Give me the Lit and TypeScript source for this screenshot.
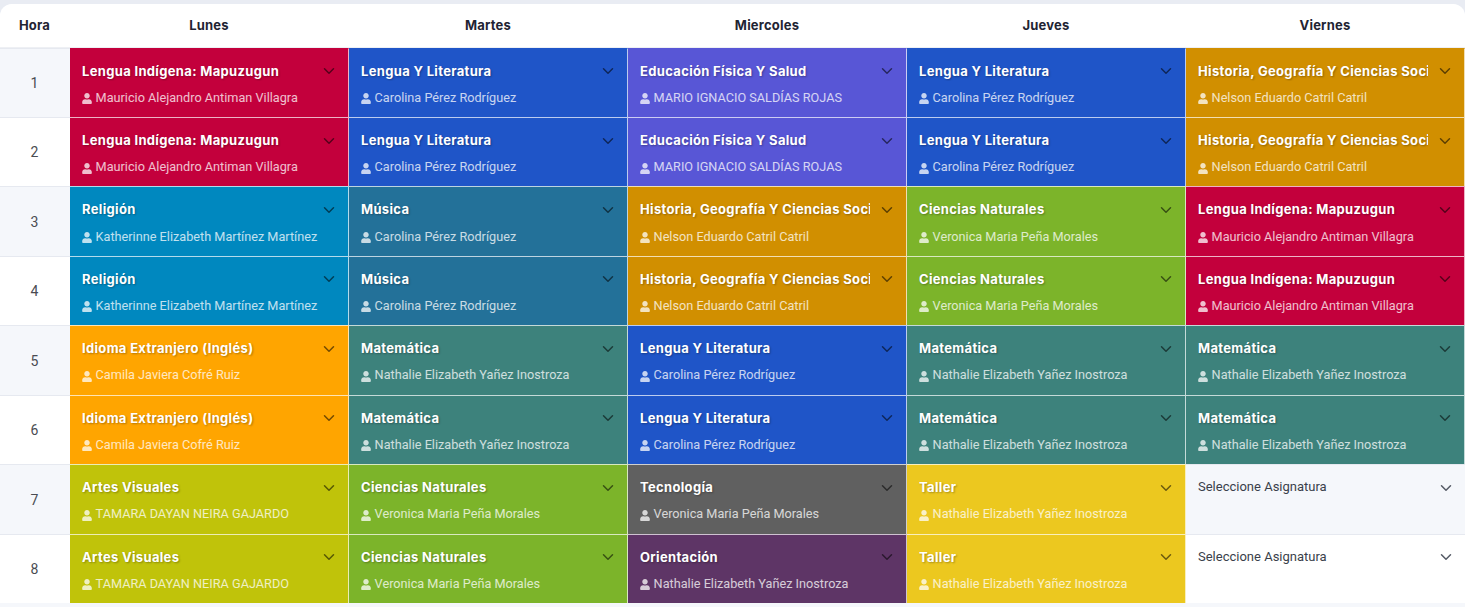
import { LitElement, html, css, svg } from "lit";
import { customElement } from "lit/decorators.js";

type Subject = { name: string; teacher: string; tone: string };

const S: Record<string, Subject> = {
  map: { name: "Lengua Indígena: Mapuzugun", teacher: "Mauricio Alejandro Antiman Villagra", tone: "crimson" },
  len: { name: "Lengua Y Literatura", teacher: "Carolina Pérez Rodríguez", tone: "blue" },
  efi: { name: "Educación Física Y Salud", teacher: "MARIO IGNACIO SALDÍAS ROJAS", tone: "indigo" },
  his: { name: "Historia, Geografía Y Ciencias Sociales", teacher: "Nelson Eduardo Catril Catril", tone: "ochre" },
  rel: { name: "Religión", teacher: "Katherinne Elizabeth Martínez Martínez", tone: "cyan" },
  mus: { name: "Música", teacher: "Carolina Pérez Rodríguez", tone: "steel" },
  cie: { name: "Ciencias Naturales", teacher: "Veronica Maria Peña Morales", tone: "green" },
  ing: { name: "Idioma Extranjero (Inglés)", teacher: "Camila Javiera Cofré Ruiz", tone: "orange" },
  mat: { name: "Matemática", teacher: "Nathalie Elizabeth Yañez Inostroza", tone: "teal" },
  art: { name: "Artes Visuales", teacher: "TAMARA DAYAN NEIRA GAJARDO", tone: "olive" },
  tec: { name: "Tecnología", teacher: "Veronica Maria Peña Morales", tone: "gray" },
  tal: { name: "Taller", teacher: "Nathalie Elizabeth Yañez Inostroza", tone: "yellow" },
  ori: { name: "Orientación", teacher: "Nathalie Elizabeth Yañez Inostroza", tone: "purple" },
};

const DAYS = ["Lunes", "Martes", "Miercoles", "Jueves", "Viernes"];
const ROWS: (string | null)[][] = [
  ["map", "len", "efi", "len", "his"],
  ["map", "len", "efi", "len", "his"],
  ["rel", "mus", "his", "cie", "map"],
  ["rel", "mus", "his", "cie", "map"],
  ["ing", "mat", "len", "mat", "mat"],
  ["ing", "mat", "len", "mat", "mat"],
  ["art", "cie", "tec", "tal", null],
  ["art", "cie", "ori", "tal", null],
];

const chevron = svg`<svg class="chev" viewBox="0 0 16 16" aria-hidden="true"><path d="m2 5 6 6 6-6" fill="none" stroke="currentColor" stroke-width="2" stroke-linecap="round" stroke-linejoin="round"/></svg>`;
const user = svg`<svg class="user" viewBox="0 0 448 512" aria-hidden="true"><path fill="currentColor" d="M224 256c70.7 0 128-57.3 128-128S294.7 0 224 0 96 57.3 96 128s57.3 128 128 128zm89.6 32h-16.7c-22.2 10.2-46.9 16-72.9 16s-50.6-5.8-72.9-16h-16.7C60.2 288 0 348.2 0 422.4V464c0 26.5 21.5 48 48 48h352c26.5 0 48-21.5 48-48v-41.6c0-74.2-60.2-134.4-134.4-134.4z"/></svg>`;

@customElement("app-root")
export class AppRoot extends LitElement {
  static styles = css`
    :host {
      display: block;
      height: 607px;
      overflow: hidden;
      background: #e9ecf3;
      padding-top: 4px;
      box-sizing: border-box;
      font-family: Roboto, "Liberation Sans", sans-serif;
    }
    .grid {
      display: grid;
      grid-template-columns: 70px repeat(5, 1fr);
      grid-template-rows: 43.62px repeat(8, 69.45px);
      height: 603px;
      align-content: start;
      background: #f5f7fb;
      border-radius: 12px 12px 0 0;
      overflow: hidden;
    }
    .head {
      display: flex;
      align-items: center;
      justify-content: center;
      padding-right: 1px;
      font-family: Inter, "Liberation Sans", sans-serif;
      font-size: 13px;
      font-weight: 700;
      letter-spacing: 0.2px;
      color: #1f2433;
      background: #fff;
      border-bottom: 1px solid #eef0f4;
      box-sizing: border-box;
    }
    .hour {
      display: flex;
      align-items: center;
      justify-content: center;
      padding: 0.2px 1px 0 0;
      font-size: 14px;
      color: #4a4c52;
      border-top: 1px solid #e6e9f0;
      box-sizing: border-box;
    }
    .odd { background: #f5f7fb; }
    .even { background: #fff; }
    .cell {
      position: relative;
      min-width: 0;
      box-sizing: border-box;
      border-right: 1px solid rgba(255, 255, 255, 0.7);
      border-top: 1px solid rgba(255, 255, 255, 0.7);
      padding: 12.9px 36px 0 12px;
      color: #fff;
    }
    .cell.top { border-top-color: transparent; }
    .cell .chev {
      position: absolute;
      top: 16.5px;
      right: 13.5px;
      width: 12px;
      height: 12px;
      color: rgba(0, 0, 0, 0.55);
    }
    .name {
      font-family: Inter, "Liberation Sans", sans-serif;
      font-size: 13px;
      line-height: 19px;
      font-weight: 700;
      letter-spacing: 0.33px;
      white-space: nowrap;
      overflow: hidden;
      text-shadow: 1px 1px 2px rgba(0, 0, 0, 0.3);
    }
    .teacher {
      display: flex;
      align-items: center;
      gap: 3.6px;
      margin-top: 8.13px;
      font-size: 12.7px;
      line-height: 18px;
      white-space: nowrap;
      opacity: 0.75;
    }
    .user { width: 10px; height: 11px; flex: none; margin-top: 2px; }
    .cell.empty {
      color: #3a3f4b;
      border-right: none;
      border-top: 1px solid #e6e9f0;
    }
    .empty .chev { color: #555b66; }
    .placeholder { font-size: 13px; line-height: 19px; margin-top: -0.7px; }
    .crimson { background: #c3003c; }
    .blue { background: #1f55c8; }
    .indigo { background: #5856d6; }
    .ochre { background: #d18f00; }
    .cyan { background: #0088bf; }
    .steel { background: #237199; }
    .green { background: #7cb42a; }
    .orange { background: #ffa500; }
    .teal { background: #3d827c; }
    .olive { background: #c0c30a; }
    .gray { background: #606060; }
    .yellow { background: #ecc81f; }
    .purple { background: #5e3566; }
  `;

  private cell(key: string | null, stripe: string, top: boolean) {
    if (!key) {
      return html`<div class="cell empty ${stripe}">
        <div class="placeholder">Seleccione Asignatura</div>
        ${chevron}
      </div>`;
    }
    const s = S[key];
    return html`<div class="cell ${s.tone} ${top ? "top" : ""}">
      <div class="name">${s.name}</div>
      <div class="teacher">${user}<span>${s.teacher}</span></div>
      ${chevron}
    </div>`;
  }

  render() {
    return html`<div class="grid">
      <div class="head">Hora</div>
      ${DAYS.map((d) => html`<div class="head">${d}</div>`)}
      ${ROWS.map((row, i) => {
        const stripe = i % 2 === 0 ? "odd" : "even";
        return html`<div class="hour ${stripe}">${i + 1}</div>
          ${row.map((k) => this.cell(k, stripe, i === 0))}`;
      })}
    </div>`;
  }
}
